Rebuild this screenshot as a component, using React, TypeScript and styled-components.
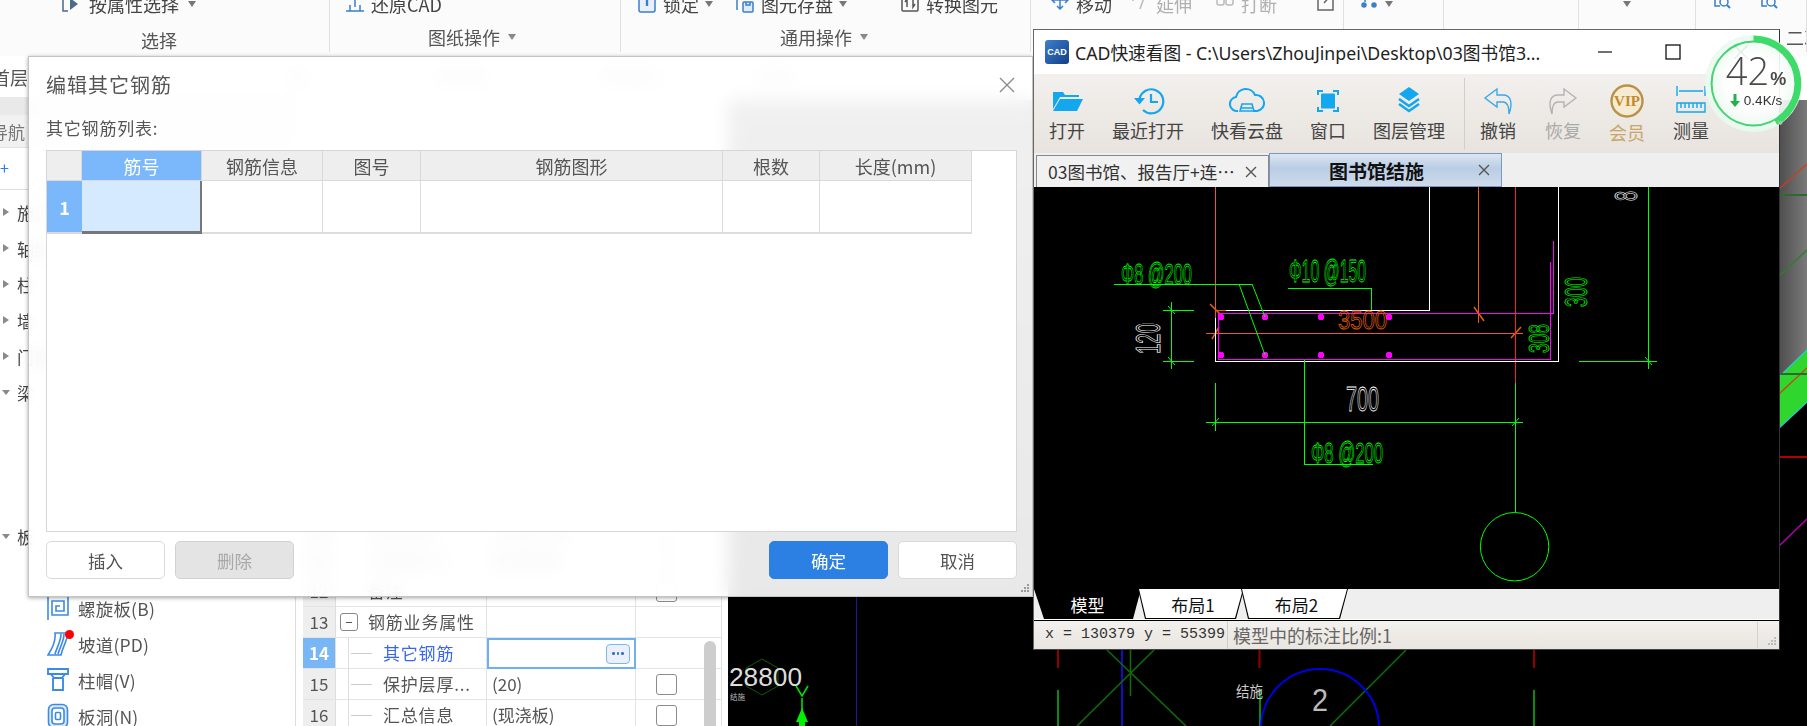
import React from 'react';
import styled, { createGlobalStyle } from 'styled-components';

const CJK = `"Noto Sans CJK SC", "Noto Sans", "Liberation Sans", sans-serif`;

const Global = createGlobalStyle`
  html, body { margin: 0; padding: 0; background: #000; }
  body { font-family: ${CJK}; }
  * { box-sizing: border-box; }
`;

const Desktop = styled.div`
  position: relative;
  width: 1807px;
  height: 726px;
  overflow: hidden;
  background: #fff;
  color: #444;
`;

/* ---------- ribbon of the application behind ---------- */
const Ribbon = styled.div`
  display: flex;
  height: 56px;
  background: #fbfbfb;
  filter: blur(0.4px);
`;
const Group = styled.div<{ $w: number; $pad: number }>`
  flex: none;
  width: ${p => p.$w}px;
  height: 52px;
  padding-left: ${p => p.$pad}px;
  border-right: 1px solid #e0e0e0;
  display: flex;
  flex-direction: column;
  overflow: hidden;
`;
const ToolRow = styled.div`
  height: 8px;
  display: flex;
  align-items: center;
`;
const Tool = styled.div<{ $w?: number; $off?: boolean; $gap?: number }>`
  flex: none;
  width: ${p => (p.$w ? `${p.$w}px` : 'auto')};
  display: flex;
  align-items: center;
  gap: ${p => p.$gap ?? 6}px;
  font-size: 18px;
  line-height: 24px;
  color: ${p => (p.$off ? '#b0b0b0' : '#444')};
`;
const Caret = styled.span<{ $grey?: boolean }>`
  flex: none;
  width: 0;
  height: 0;
  border-left: 4px solid transparent;
  border-right: 4px solid transparent;
  border-top: 6px solid ${p => (p.$grey ? '#888' : '#777')};
`;
const GroupLabel = styled.div<{ $low?: boolean; $shift?: number }>`
  margin-top: ${p => (p.$low ? 20 : 17)}px;
  margin-left: ${p => p.$shift ?? 0}px;
  height: 24px;
  display: flex;
  align-items: center;
  gap: 8px;
  font-size: 18px;
  color: #555;
  white-space: nowrap;
`;

/* ---------- floor bar ---------- */
const FloorBar = styled.div`
  height: 41px;
  display: flex;
  align-items: center;
  background: #fff;
  font-size: 17px;
  color: #666;
  filter: blur(0.4px);
`;
const FloorName = styled.div`
  flex: none;
  width: 28px;
  margin-right: 262px;
  overflow: hidden;
  direction: rtl;
  white-space: nowrap;
  font-size: 18px;
  color: #555;
`;
const FloorItem = styled.div<{ $w: number }>`
  flex: none;
  width: ${p => p.$w}px;
  color: #888;
`;

/* ---------- main row ---------- */
const Main = styled.div`
  display: flex;
  height: 629px;
  overflow: hidden;
`;

const LeftPanel = styled.div`
  flex: none;
  width: 296px;
  border-right: 1px solid #dcdcdc;
  background: #fff;
  filter: blur(0.4px);
`;
const Band = styled.div`
  height: 18px;
  background: #e9e9e9;
`;
const NavHead = styled.div`
  height: 33px;
  background: #f1f1f1;
  border-bottom: 1px solid #e2e2e2;
  display: flex;
  align-items: center;
  font-size: 17px;
  color: #777;
  text-indent: -9px;
`;
const AddRow = styled.div`
  height: 42px;
  border-bottom: 1px solid #ddd;
  display: flex;
  align-items: center;
  padding-bottom: 4px;
  color: #2a80e8;
  font-size: 16px;
`;
const TreeList = styled.div`
  padding-top: 4px;
`;
const TreeRow = styled.div`
  height: 36px;
  display: flex;
  align-items: center;
  padding-left: 2px;
  gap: 7px;
  font-size: 17px;
  color: #444;
`;
const Arrow = styled.span<{ $open?: boolean }>`
  flex: none;
  width: 0;
  height: 0;
  ${p =>
    p.$open
      ? `border-left:4px solid transparent;border-right:4px solid transparent;border-top:5px solid #8a8a8a;`
      : `border-top:4px solid transparent;border-bottom:4px solid transparent;border-left:6px solid #8a8a8a;margin-left:1px;margin-right:1px;`}
`;
const ChildRow = styled.div`
  position: relative;
  height: 36px;
  display: flex;
  align-items: center;
  padding-left: 47px;
  gap: 9px;
  font-size: 17.5px;
  color: #555;
  letter-spacing: 0.2px;
`;
const RedDot = styled.span`
  position: absolute;
  left: 65px;
  top: 4px;
  width: 9px;
  height: 9px;
  border-radius: 50%;
  background: #f00;
`;

const PropPanel = styled.div`
  position: relative;
  flex: none;
  width: 432px;
  padding: 138px 0 0 7px;
  background: #fff;
  border-right: 7px solid #fff;
  filter: blur(0.4px);
`;
const PropLine = styled.div`
  position: absolute;
  left: 425px;
  top: 0;
  bottom: 0;
  width: 1px;
  background: #e2e2e2;
`;
const PropRow = styled.div`
  display: grid;
  grid-template-columns: 33px 151px 149px 61px;
  height: 31px;
  font-size: 17px;
  color: #555;
  border-bottom: 1px solid #e4e4e4;
`;
const NumCell = styled.div<{ $sel?: boolean }>`
  display: flex;
  align-items: center;
  justify-content: center;
  padding-bottom: 2px;
  background: ${p => (p.$sel ? '#79b6f6' : '#eeeeee')};
  color: ${p => (p.$sel ? '#fff' : '#555')};
  font-weight: ${p => (p.$sel ? 700 : 400)};
  border-right: 1px solid #dedede;
  font-size: 17px;
`;
const NameCell = styled.div<{ $indent?: boolean; $link?: boolean }>`
  position: relative;
  display: flex;
  align-items: center;
  padding-left: ${p => (p.$indent ? 47 : 32)}px;
  padding-bottom: 2px;
  color: ${p => (p.$link ? '#3a66ee' : '#555')};
  border-right: 1px solid #e4e4e4;
  letter-spacing: 0.8px;
  white-space: nowrap;
  overflow: hidden;
`;
const TreeDash = styled.span`
  position: absolute;
  left: 12px;
  top: 0;
  bottom: 0;
  width: 24px;
  border-left: 1px solid #ddd;
  &::after {
    content: '';
    position: absolute;
    left: 2px;
    right: 0;
    top: 50%;
    border-top: 1px solid #ccc;
  }
`;
const Minus = styled.span`
  position: absolute;
  left: 4px;
  top: 6px;
  width: 18px;
  height: 18px;
  border: 1px solid #888;
  border-radius: 3px;
  background: #fff;
  display: flex;
  align-items: center;
  justify-content: center;
  &::after {
    content: '';
    width: 6px;
    border-top: 1px solid #555;
  }
`;
const ValueCell = styled.div<{ $sel?: boolean }>`
  display: flex;
  align-items: center;
  justify-content: space-between;
  padding: 0 5px 2px 5px;
  border-right: 1px solid #e4e4e4;
  ${p => (p.$sel ? 'border: 2px solid #6eb0f2; padding: 0 4px 0 4px; margin-bottom:-1px;' : '')}
`;
const MoreBtn = styled.span`
  width: 24px;
  height: 20px;
  border: 1.5px solid #7fb6f0;
  border-radius: 4px;
  background: #eaf0fa;
  display: flex;
  align-items: center;
  justify-content: center;
  gap: 2px;
  & i {
    width: 2.5px;
    height: 2.5px;
    background: #3f6fb8;
    border-radius: 50%;
  }
`;
const CheckCell = styled.div`
  display: flex;
  align-items: center;
  justify-content: center;
`;
const Check = styled.span`
  width: 21px;
  height: 21px;
  border: 1.5px solid #8c8c8c;
  border-radius: 3px;
  background: #fff;
`;
const Scroll = styled.div`
  position: absolute;
  left: 408px;
  top: 544px;
  width: 12px;
  height: 120px;
  border-radius: 6px;
  background: #cdcdcd;
`;

const CanvasArea = styled.div`
  flex: 1;
  height: 626px;
  margin-top: 3px;
  background: #000;
`;
const Drawing = styled.svg`
  display: block;
`;

/* ---------- dialog ---------- */
const Dialog = styled.div`
  position: absolute;
  left: 28px;
  top: 56px;
  width: 1005px;
  height: 541px;
  border: 1px solid #c4c4c4;
  padding: 0 15px 0 17px;
  background: rgba(255, 255, 255, 0.9);
  backdrop-filter: blur(9px);
  box-shadow: 0 1px 4px rgba(0, 0, 0, 0.35);
  display: flex;
  flex-direction: column;
  color: #555;
`;
const DialogHead = styled.div`
  height: 55px;
  display: flex;
  align-items: center;
  justify-content: space-between;
  font-size: 20px;
  letter-spacing: 1px;
  color: #555;
  filter: blur(0.3px);
`;
const CloseBtn = styled.svg`
  width: 18px;
  height: 18px;
  margin-right: 1px;
`;
const ListLabel = styled.div`
  height: 30px;
  display: flex;
  align-items: center;
  font-size: 17px;
  letter-spacing: 0.8px;
  color: #555;
  filter: blur(0.3px);
`;
const TableBox = styled.div`
  margin-top: 8px;
  height: 382px;
  border: 1px solid #d6d6d6;
  background: #fff;
  filter: blur(0.3px);
`;
const Grid = styled.div`
  display: grid;
  grid-template-columns: 35px 120px 121px 98px 302px 97px 152px;
  grid-template-rows: 30px 53px;
  width: max-content;
  font-size: 18px;
`;
const Head = styled.div<{ $sel?: boolean }>`
  display: flex;
  align-items: center;
  justify-content: center;
  background: ${p => (p.$sel ? '#7ab8fb' : '#eeeeee')};
  color: ${p => (p.$sel ? '#fff' : '#555')};
  border-right: 1px solid #d9d9d9;
  border-bottom: 1px solid #d9d9d9;
  white-space: nowrap;
`;
const RowHead = styled.div`
  display: flex;
  align-items: center;
  justify-content: center;
  background: #7ab8fb;
  color: #fff;
  font-weight: 700;
  border-bottom: 2px solid #d9d9d9;
`;
const Cell = styled.div<{ $sel?: boolean }>`
  background: ${p => (p.$sel ? '#d5e9ff' : '#fff')};
  border-right: ${p => (p.$sel ? '2px solid #777' : '1px solid #dcdcdc')};
  border-bottom: ${p => (p.$sel ? '3px solid #777' : '2px solid #dcdcdc')};
`;
const Footer = styled.div`
  margin-top: 9px;
  height: 38px;
  display: flex;
  gap: 10px;
  filter: blur(0.3px);
`;
const Btn = styled.button<{ $kind?: 'primary' | 'off' }>`
  width: 119px;
  height: 38px;
  padding: 0;
  font-family: ${CJK};
  font-size: 17.5px;
  border-radius: 5px;
  border: 1px solid ${p => (p.$kind === 'primary' ? '#2c7fe3' : p.$kind === 'off' ? '#d2d2d2' : '#d9d9d9')};
  background: ${p => (p.$kind === 'primary' ? '#2c7fe3' : p.$kind === 'off' ? '#e4e4e4' : '#fff')};
  color: ${p => (p.$kind === 'primary' ? '#fff' : p.$kind === 'off' ? '#a9a9a9' : '#555')};
`;
const Spacer = styled.div`
  flex: 1;
`;
const Grip = styled.svg`
  position: absolute;
  right: 1px;
  bottom: 1px;
  width: 12px;
  height: 12px;
`;

/* ---------- CAD viewer window ---------- */
const Viewer = styled.div`
  position: absolute;
  left: 1033px;
  top: 29px;
  width: 747px;
  height: 621px;
  border: 1px solid #666;
  border-right-color: #333;
  border-bottom-color: #444;
  background: #fff;
  display: flex;
  flex-direction: column;
`;
const TitleBar = styled.div`
  height: 44px;
  flex: none;
  display: flex;
  align-items: center;
  padding-left: 11px;
  background: #fff;
`;
const AppLogo = styled.div`
  flex: none;
  width: 24px;
  height: 24px;
  border-radius: 3px;
  background: linear-gradient(135deg, #3d7fd0, #123f86);
  color: #fff;
  font: 700 9px "Liberation Sans", sans-serif;
  display: flex;
  align-items: center;
  justify-content: center;
`;
const TitleText = styled.div`
  flex: none;
  width: 522px;
  padding-left: 6px;
  font-family: "Noto Sans", ${CJK};
  font-size: 17.7px;
  color: #222;
  white-space: nowrap;
`;
const WinBtn = styled.svg`
  flex: none;
  width: 16px;
  height: 16px;
`;
const WinBtns = styled.div`
  display: flex;
  gap: 52px;
  padding-left: 6px;
`;
const Toolbar = styled.div`
  height: 79px;
  flex: none;
  display: flex;
  background: linear-gradient(#f2f0ed, #e8e3de);
`;
const VTool = styled.div<{ $w: number; $tone?: string; $drop?: boolean }>`
  flex: none;
  width: ${p => p.$w}px;
  padding-top: 10px;
  display: flex;
  flex-direction: column;
  align-items: center;
  font-size: 18px;
  line-height: 24px;
  color: ${p => p.$tone ?? '#444'};
  white-space: nowrap;
  & > span {
    margin-top: ${p => (p.$drop ? 2 : 0)}px;
  }
`;
const VIcon = styled.svg`
  width: 36px;
  height: 34px;
  flex: none;
`;
const VSep = styled.div`
  flex: none;
  width: 1px;
  margin: 4px 0 4px 4px;
  background: #d2cfcb;
`;
const DocTabs = styled.div`
  height: 34px;
  flex: none;
  display: flex;
  padding-left: 2px;
  background: #efefef;
`;
const DocTab = styled.div<{ $on?: boolean }>`
  flex: none;
  width: 233px;
  margin-top: ${p => (p.$on ? 0 : 2)}px;
  display: flex;
  align-items: center;
  justify-content: space-between;
  padding: 0 11px 0 11px;
  font-size: ${p => (p.$on ? 19 : 17.5)}px;
  white-space: nowrap;
  border: 1px solid ${p => (p.$on ? '#7b98c0' : '#888')};
  border-bottom: ${p => (p.$on ? '1px solid #7b98c0' : '0')};
  background: ${p => (p.$on ? 'linear-gradient(#dce6f2, #b9cde4 45%, #cfdcec)' : '#f1f1f1')};
  color: ${p => (p.$on ? '#111' : '#333')};
  font-weight: ${p => (p.$on ? 700 : 400)};
`;
const DocTabName = styled.span<{ $center?: boolean }>`
  flex: ${p => (p.$center ? 1 : 'none')};
  text-align: center;
  padding-right: ${p => (p.$center ? 6 : 0)}px;
`;
const TabX = styled.svg`
  width: 12px;
  height: 12px;
  flex: none;
`;
const ViewerCanvas = styled.div`
  height: 402px;
  flex: none;
  background: #000;
`;
const SheetBar = styled.div`
  height: 30px;
  flex: none;
  display: flex;
  background: #efefef;
`;
const Sheet = styled.div<{ $on?: boolean; $w: number }>`
  position: relative;
  flex: none;
  width: ${p => p.$w}px;
  margin-right: -3px;
  padding-left: ${p => (p.$on ? 0 : 4)}px;
  display: flex;
  align-items: center;
  justify-content: center;
  font-size: 17px;
  color: ${p => (p.$on ? '#fff' : '#111')};
  background: #000;
  clip-path: polygon(0 0, 100% 0, calc(100% - 8px) 100%, ${p => (p.$on ? 10 : 7)}px 100%);
  & > span {
    position: relative;
  }
  &::before {
    content: '';
    position: absolute;
    inset: 0 1px 1px 1px;
    background: ${p => (p.$on ? '#000' : '#fff')};
    clip-path: polygon(0 0, 100% 0, calc(100% - 8px) 100%, ${p => (p.$on ? 10 : 7)}px 100%);
  }
`;
const Status = styled.div`
  flex: 1;
  position: relative;
  margin-top: 1px;
  border-top: 1px solid #000;
  display: flex;
  align-items: center;
  padding-left: 11px;
  background: linear-gradient(#f3f1ee, #e9e5e0);
`;
const Coord = styled.div`
  flex: none;
  width: 183px;
  font: 15px "Liberation Mono", monospace;
  color: #333;
  border-right: 1px solid #d0cdc8;
  line-height: 28px;
`;
const Scale = styled.div`
  flex: 1;
  padding-left: 5px;
  font-size: 18px;
  color: #666;
  font-family: ${CJK};
`;
const StatusEnd = styled.div`
  flex: none;
  width: 22px;
  height: 26px;
  border-left: 1px solid #d5d2cd;
`;

/* ---------- speed ball ---------- */
const Ball = styled.div`
  position: absolute;
  left: 1705px;
  top: 35px;
  width: 97px;
  height: 97px;
  border-radius: 50%;
  display: flex;
  flex-direction: column;
  align-items: center;
  padding: 14px 0 0 5px;
  background: radial-gradient(circle, rgba(255, 255, 255, 0.92) 40%, rgba(220, 246, 228, 0.9) 85%, rgba(255, 255, 255, 0.88) 86%);
`;
const BallRing = styled.svg`
  position: absolute;
  inset: 0;
`;
const Percent = styled.div`
  position: relative;
  display: flex;
  align-items: baseline;
  font: 300 38px/42px "Open Sans", "Liberation Sans", sans-serif;
  color: #4a4a4a;
  & small {
    font: 600 18px "Liberation Sans", sans-serif;
    margin-left: 1px;
  }
`;
const Speed = styled.div`
  position: relative;
  display: flex;
  align-items: center;
  gap: 4px;
  margin-top: 2px;
  font: 13.5px "Liberation Sans", sans-serif;
  color: #333;
`;

/* ---------- data ---------- */
const ribbonPaths: Record<string, React.ReactNode> = {
  select: (
    <>
      <path d="M8 2H3V19H8" />
      <path d="M10 6L18 12L10 18Z" fill="currentColor" stroke="none" />
    </>
  ),
  restore: <path d="M1 19H19M5 19V13M15 19V13M10 3V15M7 7L10 3L13 7" />,
  lock: (
    <>
      <rect x="2" y="2" width="16" height="18" rx="2" fill="#e8f0fb" />
      <path d="M10 7V14" strokeWidth="2.4" />
    </>
  ),
  save: (
    <>
      <path d="M2 18V1H13V8" />
      <rect x="8" y="10" width="10" height="10" rx="1" fill="#dfeafa" />
      <path d="M11 10V13H15V10" />
    </>
  ),
  convert: (
    <>
      <rect x="2" y="1" width="16" height="18" rx="1" />
      <path d="M7 15V7L5 10M13 7V15L15 12" />
    </>
  ),
  move: <path d="M10 0V17M2 8H18M7 14L10 17L13 14M5 5L2 8L5 11M15 5L18 8L15 11" />,
  extend: <path d="M16 0L10 17M3 3V9M3 3H7" />,
  cut: (
    <>
      <rect x="2" y="5" width="7" height="8" rx="2" />
      <rect x="11" y="5" width="7" height="8" rx="2" />
    </>
  ),
  edit: <path d="M3 2V18H18V6M9 11L17 2" />,
  dots: (
    <>
      <path d="M6 0V10" />
      <circle cx="5" cy="13" r="2" fill="currentColor" />
      <circle cx="15" cy="13" r="2" fill="currentColor" />
    </>
  ),
  find: (
    <>
      <path d="M4 0V14H9" />
      <circle cx="13" cy="10" r="4" />
      <path d="M16 13L19 16" strokeWidth="2" />
    </>
  ),
};

const RibbonIcon = ({ kind, c = '#3b7fc9' }: { kind: string; c?: string }) => (
  <svg width="20" height="24" viewBox="0 0 20 24" fill="none" stroke={c} color={c} strokeWidth="1.5">
    {ribbonPaths[kind]}
  </svg>
);
const treeTop = ['施工段', '轴线', '柱', '墙', '门窗洞'];

const Ic = { stroke: '#3c8ae8', fill: 'none', strokeWidth: 1.6 };
const Spiral = () => (
  <svg width="22" height="26" viewBox="0 0 22 26" {...Ic}>
    <path d="M1 1v24M5 1h16v19H5V6h12v10H9v-5h4" />
  </svg>
);
const Ramp = () => (
  <svg width="22" height="26" viewBox="0 0 22 26" {...Ic}>
    <path d="M8 2h13c-1 8-5 13-7 22H1C5 18 9 10 8 2zM14 3c0 7-4 13-6 20M17 3c0 7-4 13-6 20" />
  </svg>
);
const Cap = () => (
  <svg width="22" height="24" viewBox="0 0 22 24" {...Ic} strokeWidth={1.9}>
    <path d="M1 1h20v5H1zM4 6l3 4h8l3-4M6 10v12h10V10" />
  </svg>
);
const Hole = () => (
  <svg width="22" height="26" viewBox="0 0 22 26" {...Ic}>
    <rect x="1.5" y="1.5" width="19" height="23" rx="5" fill="#d9e9fb" />
    <rect x="5" y="5" width="12" height="16" rx="3" fill="#fff" />
    <rect x="8.5" y="9.5" width="5" height="7" rx="1" />
  </svg>
);

const rows: [string, string, boolean][] = [
  ['名称', '现浇板-1', false],
  ['厚度(mm)', '(120)', false],
  ['类别', '无梁板', true],
  ['是否叠合板后浇', '否', true],
  ['是否是楼板', '是', true],
  ['材质', '现浇混凝土', true],
  ['混凝土类型', '(泵送砼)', true],
  ['混凝土强度等级', '(C30)', true],
  ['混凝土外加剂', '(无)', true],
  ['泵送类型', '(混凝土泵)', true],
  ['顶标高(m)', '层顶标高', true],
  ['备注', '', true],
];

type CT = { x: number; y: number; w: number; h: number; t: string; c: string; r?: boolean };
const CadText = ({ x, y, w, h, t, c, r }: CT) => (
  <text
    x={x}
    y={y}
    fontFamily="Liberation Sans"
    fontSize={h / 0.72}
    textLength={w}
    lengthAdjust="spacingAndGlyphs"
    fill="none"
    stroke={c}
    strokeWidth={0.8}
    transform={r ? `rotate(-90 ${x} ${y})` : undefined}
  >
    {t}
  </text>
);

const G = '#00ff00';
const O = '#e8600a';
const M = '#ff00ff';
const W = '#ffffff';

const CadDrawing = () => (
  <Drawing width="745" height="402" viewBox="1034 187 745 402" fill="none" shapeRendering="crispEdges">
    <g stroke={O}>
      <path d="M1215.5 187V333M1478.5 187V323M1206 333.5H1523M1471 313.5H1553M1215 310.5H1226M1338 310.5H1358M1367 310.5H1384" />
    </g>
    <g stroke={O} strokeWidth="1.5" shapeRendering="auto">
      <path d="M1210 304L1222 316M1212 339L1219 327M1511 338L1521 327M1474 307L1484 321" />
    </g>
    <path d="M1515.5 187V383" stroke="#ff2020" />
    <g stroke={W}>
      <path d="M1429.5 187V310.5H1226M1558.5 187V361.5H1215.5V318" />
    </g>
    <g stroke={M}>
      <path d="M1553.5 241V313.5H1218.5V359.5H1550.5V262" />
    </g>
    <g fill={M}>
      {[1221, 1265, 1321, 1389].map(x => (
        <React.Fragment key={x}>
          <ellipse cx={x} cy="317" rx="3" ry="3.2" />
          <ellipse cx={x} cy="355" rx="3" ry="3.2" />
        </React.Fragment>
      ))}
    </g>
    <g stroke={G}>
      <path d="M1648.5 187V369M1579 361.5H1657M1114 284.5H1252M1288 288.5H1371.5V310M1171.5 302V369M1163 310.5H1194M1163 361.5H1194" />
      <path d="M1215.5 383V431M1206 422.5H1523M1515.5 383V512M1304.5 360V464.5H1373" />
      <path d="M1252 284L1265 317M1239 284L1265 355M1168 306L1175 314M1168 357L1175 365M1645 357L1652 365M1212 426L1219 418M1512 426L1519 418" shapeRendering="auto" />
    </g>
    <circle cx="1514.6" cy="546.7" r="34.2" stroke={G} shapeRendering="auto" />
    <g shapeRendering="auto">
      <CadText x={1121} y={284} w={71} h={21} t="Φ8 @200" c={G} />
      <CadText x={1289} y={282} w={77} h={22} t="Φ10 @150" c={G} />
      <CadText x={1311} y={463} w={72} h={21} t="Φ8 @200" c={G} />
      <CadText x={1338} y={329} w={49} h={19} t="3500" c={O} />
      <CadText x={1346} y={411} w={33} h={25} t="700" c={W} />
      <CadText x={1160} y={354} w={31} h={25} t="120" c={W} r />
      <CadText x={1587} y={307} w={30} h={22} t="300" c={G} r />
      <CadText x={1549} y={353} w={29} h={21} t="308" c={G} r />
      <CadText x={1637} y={201} w={10} h={23} t="8" c={W} r />
    </g>
  </Drawing>
);

const BaseCanvas = () => (
  <Drawing width="1079" height="626" viewBox="728 100 1079 626" fill="none">
    <defs>
      <linearGradient id="gs" x1="0" x2="1" y1="0" y2="0">
        <stop offset="0" stopColor="#4e4e4e" />
        <stop offset="1" stopColor="#7a7a7a" />
      </linearGradient>
      <linearGradient id="gl" x1="0" x2="0" y1="0" y2="1">
        <stop offset="0" stopColor="#666" />
        <stop offset="1" stopColor="#1c1c1c" />
      </linearGradient>
    </defs>
    <rect x="728" y="100" width="305" height="497" fill="url(#gl)" />
    <path d="M1779 100H1807V350L1779 377Z" fill="url(#gs)" />
    <path d="M1779 377L1807 350V402L1779 428Z" fill="#2ed62e" />
    <path d="M1779 377L1807 350M1779 428L1807 402" stroke="#2cc9c0" strokeWidth="1.5" />
    <path d="M1779 189L1807 164M1779 394L1807 368" stroke="#d53a20" strokeWidth="1.2" />
    <path d="M1779 276L1807 250" stroke="#2f7f2f" strokeWidth="1.5" />
    <path d="M1779 195H1807M1779 374H1807" stroke="#2e6a2e" strokeWidth="2" />
    <path d="M1779 457H1807" stroke="#b00000" strokeWidth="2" />
    <path d="M1779 546L1807 519" stroke="#b000b0" strokeWidth="1.5" />
    <path d="M856.5 597V726" stroke="#1a1a9a" />
    <polygon points="762,659 778,668 778,686 762,695 746,686 746,668" stroke="#0d5a0d" />
    <text x="729" y="686" fontFamily="Liberation Sans" fontSize="25" fill="#ddd" textLength="73" lengthAdjust="spacingAndGlyphs">28800</text>
    <text x="730" y="700" fontFamily="Noto Sans CJK SC" fontSize="8" fill="#bbb" textLength="15" lengthAdjust="spacingAndGlyphs">结施</text>
    <path d="M802 698V714M796 686L802 696L808 686" stroke="#00e000" strokeWidth="1.6" />
    <path d="M802 708L808 722H805V726H799V722H796Z" fill="#00f000" />
    <path d="M1058 650V668M1259.5 650V668M1534 650V668" stroke="#900000" strokeWidth="2" />
    <path d="M1058 690V726M1534 690V726M1260 690V726" stroke="#0a8a0a" strokeWidth="2" />
    <path d="M1122 650V726" stroke="#1515ff" strokeWidth="1.5" />
    <path d="M1107 650L1186 726M1154 650L1077 726M1130.5 650V696M1406 650L1330 726" stroke="#0d6a0d" strokeWidth="1.6" />
    <circle cx="1320" cy="728" r="59" stroke="#0000e0" strokeWidth="2" />
    <text x="1312" y="711" fontFamily="Liberation Sans" fontSize="32" fill="#bbb" textLength="16" lengthAdjust="spacingAndGlyphs">2</text>
    <text x="1236" y="697" fontFamily="Noto Sans CJK SC" fontSize="15" fill="#ccc" textLength="27" lengthAdjust="spacingAndGlyphs">结施</text>
  </Drawing>
);

const sky = '#12a7ee';

export default function App() {
  return (
    <Desktop>
      <Global />
      <Ribbon>
        <Group $w={330} $pad={60}>
          <ToolRow>
            <Tool $gap={9}>
              <RibbonIcon kind="select" c="#4a6a90" />
              <span>按属性选择</span>
              <Caret />
            </Tool>
          </ToolRow>
          <GroupLabel $low $shift={81}>选择</GroupLabel>
        </Group>
        <Group $w={291} $pad={15}>
          <ToolRow>
            <Tool>
              <RibbonIcon kind="restore" />
              <span>还原CAD</span>
            </Tool>
          </ToolRow>
          <GroupLabel $shift={83}>图纸操作<Caret $grey /></GroupLabel>
        </Group>
        <Group $w={410} $pad={16}>
          <ToolRow>
            <Tool $w={98}>
              <RibbonIcon kind="lock" />
              <span>锁定</span>
              <Caret />
            </Tool>
            <Tool $w={165}>
              <RibbonIcon kind="save" />
              <span>图元存盘</span>
              <Caret />
            </Tool>
            <Tool>
              <RibbonIcon kind="convert" c="#555" />
              <span>转换图元</span>
            </Tool>
          </ToolRow>
          <GroupLabel $shift={143}>通用操作<Caret $grey /></GroupLabel>
        </Group>
        <Group $w={313} $pad={19}>
          <ToolRow>
            <Tool $w={80}>
              <RibbonIcon kind="move" />
              <span>移动</span>
            </Tool>
            <Tool $w={85} $off>
              <RibbonIcon kind="extend" c="#bbb" />
              <span>延伸</span>
            </Tool>
            <Tool $w={100} $off>
              <RibbonIcon kind="cut" c="#bbb" />
              <span>打断</span>
            </Tool>
            <Tool>
              <RibbonIcon kind="edit" c="#666" />
            </Tool>
          </ToolRow>
        </Group>
        <Group $w={100} $pad={15}>
          <ToolRow>
            <Tool>
              <RibbonIcon kind="dots" />
              <Caret />
            </Tool>
          </ToolRow>
        </Group>
        <Group $w={135} $pad={0} />
        <Group $w={117} $pad={44}>
          <ToolRow>
            <Caret />
          </ToolRow>
        </Group>
        <Group $w={111} $pad={15}>
          <ToolRow>
            <Tool $w={47}>
              <RibbonIcon kind="find" />
            </Tool>
            <Tool>
              <RibbonIcon kind="find" />
            </Tool>
          </ToolRow>
          <GroupLabel $shift={75}>二次编辑</GroupLabel>
        </Group>
      </Ribbon>

      <FloorBar>
        <FloorName>首层</FloorName>
        <FloorItem $w={146}>板</FloorItem>
        <FloorItem $w={166}>现浇板</FloorItem>
        <FloorItem $w={152}>现浇板-1</FloorItem>
        <FloorItem $w={73}>分层1</FloorItem>
      </FloorBar>

      <Main>
        <LeftPanel>
          <Band />
          <NavHead>导航</NavHead>
          <AddRow>+</AddRow>
          <TreeList>
            {treeTop.map(t => (
              <TreeRow key={t}>
                <Arrow />
                {t}
              </TreeRow>
            ))}
            <TreeRow>
              <Arrow $open />
              梁
            </TreeRow>
            <ChildRow />
            <ChildRow />
            <ChildRow />
            <TreeRow>
              <Arrow $open />
              板
            </TreeRow>
            <ChildRow />
            <ChildRow>
              <Spiral />
              螺旋板(B)
            </ChildRow>
            <ChildRow>
              <Ramp />
              <RedDot />
              坡道(PD)
            </ChildRow>
            <ChildRow>
              <Cap />
              柱帽(V)
            </ChildRow>
            <ChildRow>
              <Hole />
              板洞(N)
            </ChildRow>
          </TreeList>
        </LeftPanel>

        <PropPanel>
          {rows.map(([n, v, c], i) => (
            <PropRow key={n}>
              <NumCell>{i + 1}</NumCell>
              <NameCell>{n}</NameCell>
              <ValueCell>{v}</ValueCell>
              <CheckCell>{c && <Check />}</CheckCell>
            </PropRow>
          ))}
          <PropRow>
            <NumCell>13</NumCell>
            <NameCell>
              <Minus />
              钢筋业务属性
            </NameCell>
            <ValueCell />
            <CheckCell />
          </PropRow>
          <PropRow>
            <NumCell $sel>14</NumCell>
            <NameCell $indent $link>
              <TreeDash />
              其它钢筋
            </NameCell>
            <ValueCell $sel>
              <span />
              <MoreBtn>
                <i />
                <i />
                <i />
              </MoreBtn>
            </ValueCell>
            <CheckCell />
          </PropRow>
          <PropRow>
            <NumCell>15</NumCell>
            <NameCell $indent>
              <TreeDash />
              保护层厚...
            </NameCell>
            <ValueCell>(20)</ValueCell>
            <CheckCell>
              <Check />
            </CheckCell>
          </PropRow>
          <PropRow>
            <NumCell>16</NumCell>
            <NameCell $indent>
              <TreeDash />
              汇总信息
            </NameCell>
            <ValueCell>(现浇板)</ValueCell>
            <CheckCell>
              <Check />
            </CheckCell>
          </PropRow>
          <PropLine />
          <Scroll />
        </PropPanel>

        <CanvasArea>
          <BaseCanvas />
        </CanvasArea>
      </Main>

      <Dialog>
        <DialogHead>
          编辑其它钢筋
          <CloseBtn viewBox="0 0 18 18" stroke="#8a8a8a" strokeWidth="1.4">
            <path d="M2 2L16 16M16 2L2 16" />
          </CloseBtn>
        </DialogHead>
        <ListLabel>其它钢筋列表:</ListLabel>
        <TableBox>
          <Grid>
            <Head />
            <Head $sel>筋号</Head>
            <Head>钢筋信息</Head>
            <Head>图号</Head>
            <Head>钢筋图形</Head>
            <Head>根数</Head>
            <Head>长度(mm)</Head>
            <RowHead>1</RowHead>
            <Cell $sel />
            <Cell />
            <Cell />
            <Cell />
            <Cell />
            <Cell />
          </Grid>
        </TableBox>
        <Footer>
          <Btn>插入</Btn>
          <Btn $kind="off">删除</Btn>
          <Spacer />
          <Btn $kind="primary">确定</Btn>
          <Btn>取消</Btn>
        </Footer>
        <Grip viewBox="0 0 12 12" fill="#9a9a9a">
          <rect x="8" y="1" width="2" height="2" />
          <rect x="5" y="4" width="2" height="2" />
          <rect x="8" y="4" width="2" height="2" />
          <rect x="2" y="7" width="2" height="2" />
          <rect x="5" y="7" width="2" height="2" />
          <rect x="8" y="7" width="2" height="2" />
        </Grip>
      </Dialog>

      <Viewer>
        <TitleBar>
          <AppLogo>CAD</AppLogo>
          <TitleText>CAD快速看图 - C:\Users\ZhouJinpei\Desktop\03图书馆3...</TitleText>
          <WinBtns>
            <WinBtn viewBox="0 0 16 16" stroke="#111" strokeWidth="1.2">
              <path d="M1 8H15" />
            </WinBtn>
            <WinBtn viewBox="0 0 16 16" stroke="#111" strokeWidth="1.3" fill="none">
              <rect x="1" y="1" width="14" height="14" />
            </WinBtn>
            <WinBtn viewBox="0 0 16 16" stroke="#111" strokeWidth="1.2">
              <path d="M1 1L15 15M15 1L1 15" />
            </WinBtn>
          </WinBtns>
        </TitleBar>
        <Toolbar>
          <VTool $w={66}>
            <VIcon viewBox="0 0 36 34" fill={sky}>
              <path d="M4 25V8h10l2 3h14v2H11L4 25z" />
              <path d="M11 15h23l-6 12H4z" />
            </VIcon>
            <span>打开</span>
          </VTool>
          <VTool $w={96}>
            <VIcon viewBox="0 0 36 34" fill="none" stroke={sky} strokeWidth="2.2">
              <path d="M9.5 15A12 12 0 1 1 13 26" />
              <path d="M4 14h11l-5.500 6.500z" fill={sky} stroke="none" />
              <path d="M21 10v8h7" />
            </VIcon>
            <span>最近打开</span>
          </VTool>
          <VTool $w={102}>
            <VIcon viewBox="0 0 36 34" fill="none" stroke={sky} strokeWidth="2">
              <path d="M9 27A7 7 0 0 1 7 13A10 10 0 0 1 26 11A8 8 0 0 1 28 27H24" />
              <path d="M11 27l2-7h10l2 7zM12 24h12" strokeWidth="1.6" />
            </VIcon>
            <span>快看云盘</span>
          </VTool>
          <VTool $w={60}>
            <VIcon viewBox="0 0 36 34" fill="none" stroke={sky} strokeWidth="2">
              <path d="M8 11V7h5M23 7h5v4M28 23v4h-5M13 27H8v-4" />
              <rect x="11" y="9.500" width="14" height="15" fill={sky} rx="1" stroke="none" />
            </VIcon>
            <span>窗口</span>
          </VTool>
          <VTool $w={102}>
            <VIcon viewBox="0 0 36 34" fill={sky}>
              <path d="M18 3L28 10L18 17L8 10Z" />
              <path d="M8 15L18 22L28 15" fill="none" stroke={sky} strokeWidth="2.6" />
              <path d="M8 20L18 27L28 20" fill="none" stroke={sky} strokeWidth="2.6" />
            </VIcon>
            <span>图层管理</span>
          </VTool>
          <VSep />
          <VTool $w={66}>
            <VIcon viewBox="0 0 36 34" fill="none" stroke="#3aa9ea" strokeWidth="1.4">
              <path d="M17 5L5 14L17 23V18H23C28 18 29 23 29 30C33 19 31 11 23 11H17Z" />
            </VIcon>
            <span>撤销</span>
          </VTool>
          <VTool $w={64} $tone="#aaa">
            <VIcon viewBox="0 0 36 34" fill="none" stroke="#b4b4b4" strokeWidth="1.4">
              <path d="M19 5L31 14L19 23V18H13C8 18 7 23 7 30C3 19 5 11 13 11H19Z" />
            </VIcon>
            <span>恢复</span>
          </VTool>
          <VTool $w={64} $tone="#c9a568" $drop>
            <VIcon viewBox="0 0 36 34" fill="#f5ead2" stroke="#b9914a" strokeWidth="2.4">
              <circle cx="18" cy="17" r="15.500" />
              <text x="18" y="22" textAnchor="middle" fontFamily="Liberation Serif" fontWeight="700" fontSize="15" fill="#c28a2a" stroke="none">VIP</text>
            </VIcon>
            <span>会员</span>
          </VTool>
          <VTool $w={64}>
            <VIcon viewBox="0 0 36 34" fill="none" stroke={sky} strokeWidth="1.4">
              <path d="M4 2V12M32 2V12M6 7H30" />
              <path d="M4 19H32V28H4ZM8 19V24M12 19V24M16 19V24M20 19V24M24 19V24M28 19V24" />
            </VIcon>
            <span>测量</span>
          </VTool>
        </Toolbar>
        <DocTabs>
          <DocTab>
            <DocTabName>03图书馆、报告厅+连⋯</DocTabName>
            <TabX viewBox="0 0 12 12" stroke="#555" strokeWidth="1.4">
              <path d="M1 1L11 11M11 1L1 11" />
            </TabX>
          </DocTab>
          <DocTab $on>
            <DocTabName $center>图书馆结施</DocTabName>
            <TabX viewBox="0 0 12 12" stroke="#555" strokeWidth="1.4">
              <path d="M1 1L11 11M11 1L1 11" />
            </TabX>
          </DocTab>
        </DocTabs>
        <ViewerCanvas>
          <CadDrawing />
        </ViewerCanvas>
        <SheetBar>
          <Sheet $on $w={107}>
            <span>模型</span>
          </Sheet>
          <Sheet $w={106}>
            <span>布局1</span>
          </Sheet>
          <Sheet $w={107}>
            <span>布局2</span>
          </Sheet>
        </SheetBar>
        <Status>
          <Coord>x = 130379 y = 55399</Coord>
          <Scale>模型中的标注比例:1</Scale>
          <StatusEnd />
          <Grip viewBox="0 0 12 12" fill="#bdbdbd">
            <rect x="8" y="1" width="2" height="2" />
            <rect x="5" y="4" width="2" height="2" />
            <rect x="8" y="4" width="2" height="2" />
            <rect x="2" y="7" width="2" height="2" />
            <rect x="5" y="7" width="2" height="2" />
            <rect x="8" y="7" width="2" height="2" />
          </Grip>
        </Status>
      </Viewer>

      <Ball>
        <BallRing viewBox="0 0 96 96" width="97" height="97" fill="none">
          <circle cx="48" cy="48" r="41.500" stroke="#45d375" strokeWidth="2" />
          <path d="M48 3.500A44.500 44.500 0 0 1 70 86.500" stroke="#3ddb68" strokeWidth="6" />
          <text x="71" y="90" fontFamily="Liberation Sans" fontSize="11" fill="#c8c8c8">»</text>
        </BallRing>
        <Percent>
          42<small>%</small>
        </Percent>
        <Speed>
          <svg width="10" height="13" viewBox="0 0 10 13" fill="#22b14c">
            <path d="M3.500 0h3v7H10L5 13 0 7h3.500z" />
          </svg>
          0.4K/s
        </Speed>
      </Ball>
    </Desktop>
  );
}
